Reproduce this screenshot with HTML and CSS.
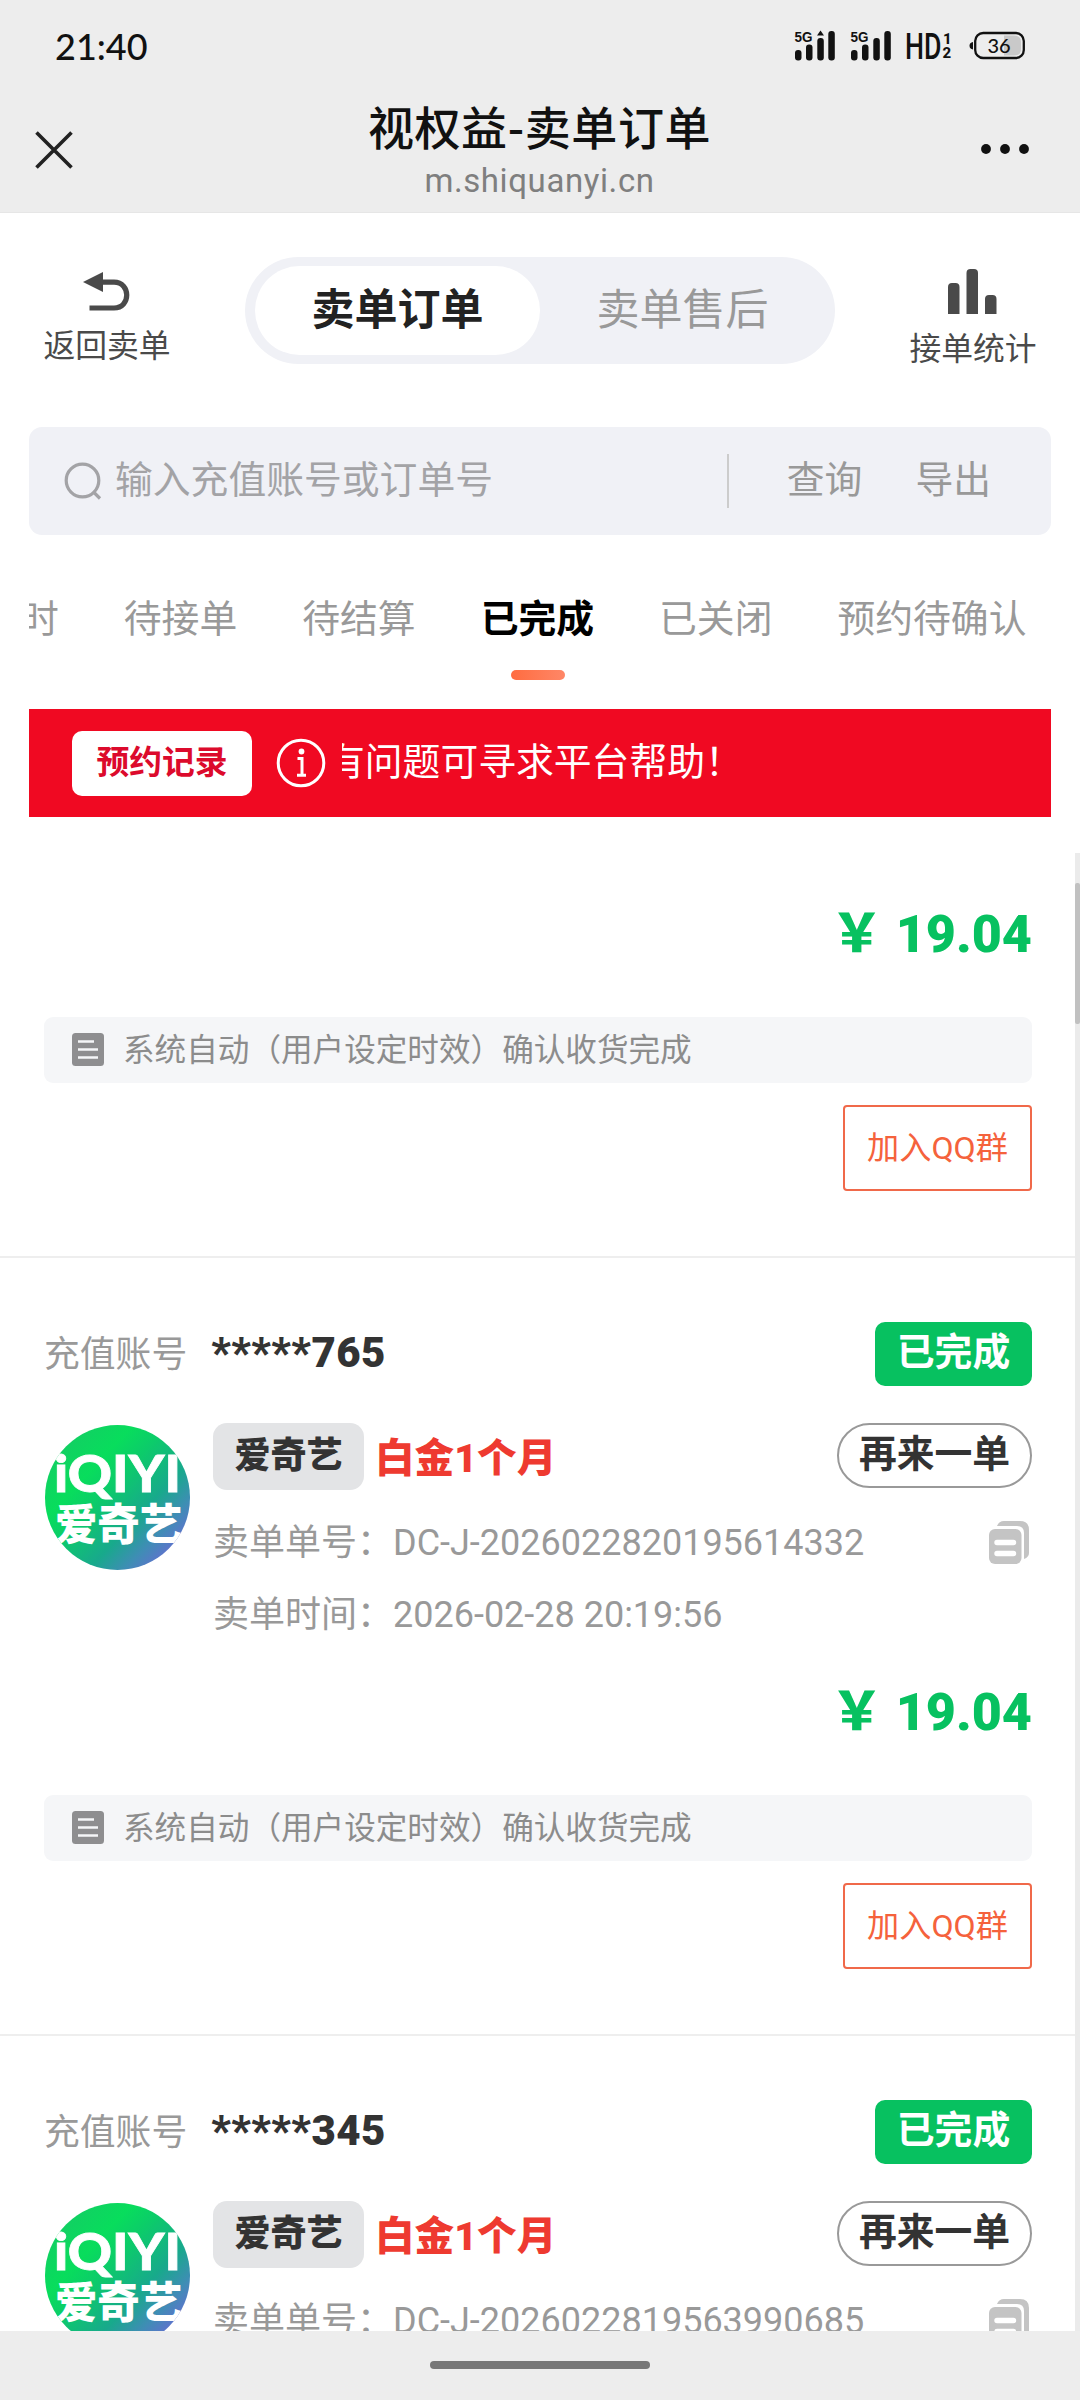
FILE: index.html
```html
<!DOCTYPE html>
<html lang="zh-CN">
<head>
<meta charset="utf-8">
<title>视权益-卖单订单</title>
<link rel="stylesheet" href="styles.css">
</head>
<body>
<svg class="defs" width="0" height="0" aria-hidden="true">
  <defs>
    <linearGradient id="logo-bg" x1="0.1" y1="0.15" x2="0.88" y2="0.88">
      <stop offset="0" stop-color="#12cf63"/>
      <stop offset="0.25" stop-color="#08dd5c"/>
      <stop offset="0.42" stop-color="#0ccb6a"/>
      <stop offset="0.68" stop-color="#18a98c"/>
      <stop offset="0.85" stop-color="#3f8db5"/>
      <stop offset="1" stop-color="#636fd0"/>
    </linearGradient>
    <clipPath id="logo-clip"><circle cx="72.5" cy="72.5" r="72.5"/></clipPath>
    <symbol id="logo" viewBox="0 0 145 145">
      <g clip-path="url(#logo-clip)">
        <rect width="145" height="145" fill="url(#logo-bg)"/>
        <text class="logo-latin" x="9" y="67" textLength="127" lengthAdjust="spacingAndGlyphs">iQIYI</text>
        <text class="logo-han" x="10" y="115" textLength="127" lengthAdjust="spacingAndGlyphs">爱奇艺</text>
      </g>
    </symbol>
    <symbol id="note" viewBox="0 0 32 33">
      <rect width="32" height="33" rx="3.5" fill="#8e8e90"/>
      <path d="M6 8.5H22M6 16.5H26M6 24.500H26" stroke="#f5f6f8" stroke-width="2.4" fill="none"/>
    </symbol>
    <symbol id="copy" viewBox="0 0 40 43">
      <path d="M8 5Q10 0 15 0H31Q40 0 40 9V32Q40 36 35 38V12Q35 5 28 5Z" fill="#c4c4c4"/>
      <rect y="8" width="32.500" height="35" rx="6" fill="#c4c4c4"/>
      <path d="M8 21.500H24.500M8 32.500H24.500" stroke="#fff" stroke-width="5.4" stroke-linecap="round"/>
    </symbol>
  </defs>
</svg>

<div class="screen">
  <header class="top">
    <div class="status">
      <span class="clock">21:40</span>
      <svg class="status-icons" width="232" height="32" viewBox="794 30 232 32">
        <g fill="#111">
          <rect x="795" y="50" width="6.5" height="10.500" rx="3"/>
          <rect x="806" y="44.500" width="6.5" height="16" rx="3"/>
          <rect x="817.300" y="38" width="6.5" height="22.500" rx="3"/>
          <rect x="828.300" y="31" width="6.5" height="29.500" rx="3"/>
          <path d="M817 35.500L820.500 30.500L824 35.500Z"/>
          <rect x="851" y="50" width="6.5" height="10.500" rx="3"/>
          <rect x="862" y="44.500" width="6.5" height="16" rx="3"/>
          <rect x="873.300" y="38" width="6.5" height="22.500" rx="3"/>
          <rect x="884.300" y="31" width="6.5" height="29.500" rx="3"/>
          <path d="M973 42Q969.500 42.500 969.500 45.700T973 49.500Z"/>
        </g>
        <g class="net">
          <text x="794.500" y="42" textLength="18" lengthAdjust="spacingAndGlyphs">5G</text>
          <text x="850.500" y="42" textLength="18" lengthAdjust="spacingAndGlyphs">5G</text>
        </g>
        <text class="hd" x="905" y="58.500" textLength="36.500" lengthAdjust="spacingAndGlyphs">HD</text>
        <text class="sim" x="943" y="43.500">1</text>
        <text class="sim" x="942.500" y="58">2</text>
        <path d="M1004 35.500H1014Q1021 35.500 1021 42V49Q1021 55.500 1014 55.500H1004Z" fill="#c9c9c9"/>
        <rect x="975.200" y="33" width="48.600" height="25" rx="8" fill="none" stroke="#111" stroke-width="2.3"/>
        <text class="level" x="999" y="52.800" text-anchor="middle">36</text>
      </svg>
    </div>
    <div class="titlebar">
      <svg class="close" width="38" height="38" viewBox="0 0 38 38"><path d="M1.500 1.500L36.500 36.500M36.500 1.500L1.500 36.500" stroke="#222" stroke-width="3.600" fill="none"/></svg>
      <div class="titles">
        <h1 class="title">视权益-卖单订单</h1>
        <div class="domain">m.shiquanyi.cn</div>
      </div>
      <svg class="more" width="48" height="10" viewBox="0 0 48 10" fill="#111"><circle cx="5" cy="5" r="4.900"/><circle cx="24" cy="5" r="4.900"/><circle cx="43" cy="5" r="4.900"/></svg>
    </div>
  </header>

  <nav class="modes">
    <div class="action">
      <svg width="48" height="40" viewBox="0 0 48 40"><path d="M0 11L20 1V21Z" fill="#4a4a4a"/><path d="M19 11.200H31C48 11.200 48 37 31 37H6.500" fill="none" stroke="#4a4a4a" stroke-width="5.200"/></svg>
      <span>返回卖单</span>
    </div>
    <div class="segment">
      <span class="seg seg-on">卖单订单</span>
      <span class="seg">卖单售后</span>
    </div>
    <div class="action action-stats">
      <svg width="49" height="45" viewBox="0 0 49 45" fill="#4a4a4a"><path d="M0 45V18Q0 14 4 14H7.500Q11.500 14 11.500 18V45ZM18.500 45V4Q18.500 0 22.500 0H26Q30 0 30 4V45ZM37 45V30Q37 26 41 26H44.500Q48.500 26 48.500 30V45Z"/></svg>
      <span>接单统计</span>
    </div>
  </nav>

  <div class="search">
    <svg width="38" height="38" viewBox="0 0 38 38" fill="none" stroke="#a3a3a6" stroke-width="3.200"><circle cx="18.500" cy="18.500" r="16.300"/><path d="M29 29.500L36 36.500"/></svg>
    <span class="placeholder">输入充值账号或订单号</span>
    <span class="rule"></span>
    <span class="link">查询</span>
    <span class="link">导出</span>
  </div>

  <div class="tabs">
    <span class="tab">时</span>
    <span class="tab">待接单</span>
    <span class="tab">待结算</span>
    <span class="tab tab-on">已完成</span>
    <span class="tab">已关闭</span>
    <span class="tab">预约待确认</span>
  </div>

  <div class="notice">
    <span class="notice-btn">预约记录</span>
    <svg width="50" height="50" viewBox="0 0 50 50" fill="none" stroke="#fff"><circle cx="25" cy="25" r="22.800" stroke-width="3"/><circle cx="25.500" cy="13.500" r="2.900" fill="#fff" stroke="none"/><path d="M21.500 20.500H26V37M21 37.200H30" stroke-width="3"/></svg>
    <div class="marquee"><span class="marquee-text">有问题可寻求平台帮助！</span></div>
  </div>

  <main class="list">
    <article class="card">
      <div class="price">￥ 19.04</div>
      <div class="remark"><svg width="32" height="33"><use href="#note"/></svg><span class="remark-text">系统自动（用户设定时效）确认收货完成</span></div>
      <div class="foot"><span class="qq">加入QQ群</span></div>
    </article>

    <article class="card">
      <div class="head">
        <span class="label">充值账号</span><span class="account">*****765</span><span class="state">已完成</span>
      </div>
      <div class="body">
        <svg class="logo" width="145" height="145"><use href="#logo"/></svg>
        <div class="info">
          <div class="product"><span class="brand">爱奇艺</span><span class="plan">白金1个月</span><span class="again">再来一单</span></div>
          <div class="line"><span class="line-text">卖单单号：DC-J-2026022820195614332</span><svg class="copy" width="40" height="43"><use href="#copy"/></svg></div>
          <div class="line"><span class="line-text">卖单时间：2026-02-28 20:19:56</span></div>
        </div>
      </div>
      <div class="price">￥ 19.04</div>
      <div class="remark"><svg width="32" height="33"><use href="#note"/></svg><span class="remark-text">系统自动（用户设定时效）确认收货完成</span></div>
      <div class="foot"><span class="qq">加入QQ群</span></div>
    </article>

    <article class="card">
      <div class="head">
        <span class="label">充值账号</span><span class="account">*****345</span><span class="state">已完成</span>
      </div>
      <div class="body">
        <svg class="logo" width="145" height="145"><use href="#logo"/></svg>
        <div class="info">
          <div class="product"><span class="brand">爱奇艺</span><span class="plan">白金1个月</span><span class="again">再来一单</span></div>
          <div class="line"><span class="line-text">卖单单号：DC-J-2026022819563990685</span><svg class="copy" width="40" height="43"><use href="#copy"/></svg></div>
        </div>
      </div>
    </article>
    <div class="track"><div class="thumb"></div></div>
  </main>

  <footer class="gesture"><span class="pill"></span></footer>
</div>
</body>
</html>
```
FILE: styles.css
```css
* { box-sizing: border-box; }
body {
  margin: 0;
  background: #fff;
  font-family: Roboto, "Noto Sans CJK SC", sans-serif;
  color: #333;
}
svg { display: block; flex: none; }
.defs { position: absolute; }
.screen {
  width: 1080px;
  height: 2400px;
  display: flex;
  flex-direction: column;
  overflow: hidden;
  white-space: nowrap;
}

/* status bar and title */
.top { height: 213px; flex: none; background: #ededed; border-bottom: 1px solid #e6e6e6; }
.status { height: 92px; display: flex; justify-content: space-between; padding: 0 54px 0 55px; align-items: center; }
.clock { font: 500 36px/40px Lato, sans-serif; color: #111; }
.net text { font: 700 14px "Liberation Sans", sans-serif; fill: #111; }
.hd { font: 500 37px Roboto, sans-serif; fill: #111; }
.sim { font: 800 15px Roboto, sans-serif; fill: #111; }
.level { font: 500 20px Lato, sans-serif; fill: #111; }
.titlebar { height: 120px; display: grid; grid-template-columns: 100px 1fr 100px; padding: 0 51px 0 35px; }
.close { margin-top: 39px; }
.more { margin-top: 52px; justify-self: end; }
.titles { text-align: center; padding-left: 15px; }
.title { margin: 3px 0 0; font: 500 46px/60px "Noto Sans CJK SC", sans-serif; letter-spacing: 0.6px; color: #111; }
.domain { font-size: 33px; line-height: 40px; letter-spacing: 0.6px; margin-top: 6px; color: #7f7f7f; }

/* mode switch */
.modes { height: 214px; flex: none; display: flex; justify-content: space-between; align-items: flex-start; padding: 44px 43px 0; }
.action { width: 128px; padding-top: 14px; display: flex; flex-direction: column; align-items: center; color: #4a4a4a; }
.action span { font-size: 31.800px; line-height: 40px; margin-top: 15px; }
.action-stats { padding-top: 12px; }
.action-stats svg { margin-right: 2px; }
.segment { width: 590px; height: 107px; border-radius: 54px; background: #f0f1f6; padding: 9px 10px; display: flex; }
.seg { width: 285px; height: 89px; border-radius: 45px; font-size: 43px; line-height: 89px; text-align: center; color: #999; }
.seg-on { background: #fff; font-weight: 700; color: #222; }

/* search */
.search { height: 108px; flex: none; margin: 0 29px; padding: 0 60px 0 35px; border-radius: 13px; background: #f0f1f6; display: flex; align-items: center; font-size: 37.800px; color: #a3a3a6; }
.placeholder { flex: 1; padding: 0 0 10px 13px; }
.rule { width: 2px; height: 54px; background: #ccc; margin-right: 31px; }
.link { color: #999; margin-left: 27px; padding-bottom: 9px; }
.link + .link { margin-left: 53px; }

/* order tabs */
.tabs { height: 174px; flex: none; margin: 0 29px; overflow: hidden; display: flex; gap: 65px; padding-top: 59px; font-size: 37.800px; line-height: 50px; color: #999; }
.tab:first-child { margin-left: -8px; }
.tab { flex: none; }
.tab-on { font-weight: 700; color: #000; display: flex; flex-direction: column; align-items: center; }
.tab-on::after { content: ""; width: 54px; height: 10px; border-radius: 5px; margin: 26px 0 0 2px; background: linear-gradient(90deg, #ff6c40, #ff8767); }

/* notice */
.notice { height: 108px; flex: none; margin: 0 29px; padding: 0 43px; background: #f00922; display: flex; align-items: center; }
.notice-btn { width: 180px; height: 65px; border-radius: 10px; background: #fff; color: #dc0a2c; font-size: 32.800px; line-height: 64px; font-weight: 700; text-align: center; margin-right: 24px; }
.marquee { flex: 1; overflow: hidden; margin-left: 16px; color: #fff; font-size: 37.800px; line-height: 54px; }
.marquee-text { display: block; margin: -3px 0 0 -15px; }

/* order list */
.list { flex: 1; min-height: 0; overflow: hidden; position: relative; }
.card { padding: 64px 48px 65px 44px; border-bottom: 2px solid #eee; }
.card:first-child { padding-top: 81px; }
.head { height: 64px; display: flex; align-items: center; }
.label { font-size: 35.800px; color: #999; padding-bottom: 6px; }
.account { flex: 1; font-size: 42px; font-weight: 900; letter-spacing: 0.5px; margin: 0 0 4px 24px; }
.state { width: 157px; height: 64px; border-radius: 10px; background: #07c160; color: #fff; font-size: 37.800px; line-height: 61px; font-weight: 700; text-align: center; }
.body { margin-top: 37px; display: flex; }
.logo { margin: 2px 24px 0 1px; }
.logo-latin { font: 900 51px Lato, sans-serif; fill: #fff; stroke: #fff; stroke-width: 0.8px; }
.logo-han { font: 900 43px "Noto Sans CJK SC", sans-serif; fill: #fff; }
.info { flex: 1; }
.product { height: 67px; display: flex; align-items: flex-start; margin-bottom: 16px; margin-left: -1px; }
.brand { width: 151px; height: 67px; border-radius: 14px; background: #e3e4e6; font-size: 36px; line-height: 66px; font-weight: 900; text-align: center; }
.plan { flex: 1; margin-left: 11px; font-size: 39.600px; line-height: 71px; font-weight: 900; color: #ee3a30; }
.again { width: 195px; height: 65px; border: 2px solid #999; border-radius: 33px; font-size: 37.800px; line-height: 59px; font-weight: 700; text-align: center; }
.line { height: 72px; display: flex; align-items: center; justify-content: space-between; font-size: 36px; color: #999; }
.line-text { padding-bottom: 6px; margin-left: -1px; }
.copy { margin-right: 3px; }
.price { height: 72px; margin-top: 26px; font-size: 52px; line-height: 73px; font-weight: 900; text-align: right; color: #07c160; }
.card:first-child .price { margin-top: 0; }
.remark { height: 66px; margin-top: 47px; padding: 0 28px 2px; border-radius: 9px; background: #f5f6f8; display: flex; align-items: center; gap: 19px; font-size: 31.600px; color: #8c8c8c; }
.remark-text { padding-bottom: 5px; }
.foot { margin-top: 22px; display: flex; justify-content: flex-end; }
.qq { width: 189px; height: 86px; border: 2px solid #f0694a; border-radius: 4px; color: #f5623c; font-size: 32.200px; line-height: 82px; text-align: center; }
.track { position: absolute; top: 36px; right: 0; bottom: 0; width: 5px; background: #ebebeb; }
.thumb { height: 141px; margin-top: 30px; background: #c1c1c1; border-radius: 2px; }

.gesture { height: 69px; flex: none; background: #ededed; display: flex; justify-content: center; }
.pill { width: 220px; height: 8px; border-radius: 4px; margin-top: 30px; background: #787878; }
```
